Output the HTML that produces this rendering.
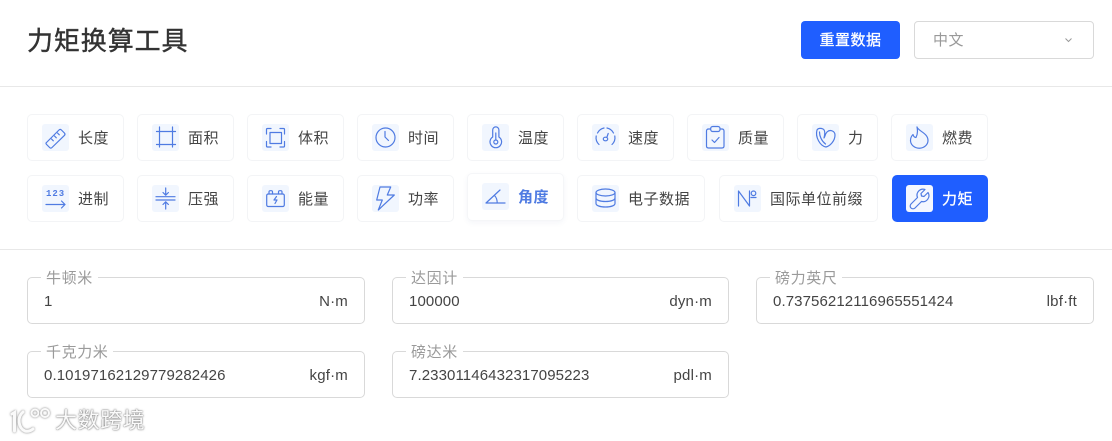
<!DOCTYPE html>
<html lang="zh"><head><meta charset="utf-8"><title>力矩换算工具</title>
<style>
*{box-sizing:border-box}
html,body{margin:0;padding:0;width:1112px;height:441px;overflow:hidden;background:#fff;font-family:"Liberation Sans","Noto Sans CJK SC",sans-serif;color:#333}
.a{position:absolute}
.hr{position:absolute;left:0;width:1112px;height:1px;background:#e8e8e8}
.b{position:absolute;height:47px;border:1px solid #f3f4f6;border-radius:5px;background:#fff;font-size:15px;letter-spacing:.5px;color:#444}
.b .i{position:absolute;left:14px;top:9px;width:27px;height:27px;background:#f1f6fe;border-radius:3px}
.b .i svg{position:absolute;left:0;top:0;width:27px;height:27px;fill:none;stroke:#4f7be2;stroke-width:1.2;stroke-linecap:round;stroke-linejoin:round}
.b span{position:absolute;left:50px;top:0;line-height:47px;white-space:nowrap}
.f{position:absolute;height:47px;border:1px solid #d9d9d9;border-radius:5px;background:#fff}
.f label{position:absolute;left:13px;top:-9px;background:#fff;padding:0 5px;font-size:15px;letter-spacing:.6px;line-height:20px;color:#9a9a9a;white-space:nowrap}
.f .v{position:absolute;left:16px;top:14px;font-size:15px;letter-spacing:.1px;line-height:20px;color:#444;white-space:nowrap}
.f .u{position:absolute;right:16px;top:14px;font-size:15px;letter-spacing:.2px;line-height:20px;color:#444;white-space:nowrap}
</style></head><body>
<div class="a" style="left:27px;top:22px;font-size:26px;line-height:38px;letter-spacing:.9px;color:#333;white-space:nowrap;-webkit-text-stroke:.4px #333">力矩换算工具</div>
<div class="a" style="left:801px;top:21px;width:99px;height:38px;border-radius:4px;background:#1f5eff;color:#fff;font-size:15px;letter-spacing:.5px;line-height:40px;text-align:center;-webkit-text-stroke:.3px #fff">重置数据</div>
<div class="a" style="left:914px;top:21px;width:180px;height:38px;border:1px solid #d9d9d9;border-radius:4px;color:#999;font-size:15px;letter-spacing:.5px;line-height:38px;padding-left:18px">中文
<svg class="a" style="left:149px;top:15px" width="10" height="7" fill="none" stroke="#999" stroke-width="1"><path d="M1.500 1.500l3 3 3-3"/></svg></div>
<div class="hr" style="top:86px"></div>
<div class="hr" style="top:249px"></div>

<div class="b" style="left:27px;top:114px;width:97px"><div class="i"><svg viewBox="0 0 27 27"><path d="M4.500 18.500L17 6q1.200-1.200 2.400 0l3 3q1.200 1.200 0 2.400L10 23.500q-1.200 1.200-2.400 0l-3-3q-1.200-1.200-.1-2z"/><path d="M9.500 15l1.800 1.800M12.500 12l1.800 1.800M15.500 9l1.800 1.800"/></svg></div><span>长度</span></div>
<div class="b" style="left:137px;top:114px;width:97px"><div class="i"><svg viewBox="0 0 27 27"><path d="M7.500 3v20M20.500 3v20M4.500 7.500h19M4.500 20.500h19"/></svg></div><span>面积</span></div>
<div class="b" style="left:247px;top:114px;width:97px"><div class="i"><svg viewBox="0 0 27 27"><rect x="8" y="8.500" width="11.500" height="11"/><path d="M9 4.500H5.500q-1 0-1 1V10M18 4.500h3.500q1 0 1 1V10M9 23H5.500q-1 0-1-1v-4.500M18 23h3.500q1 0 1-1v-4.500"/></svg></div><span>体积</span></div>
<div class="b" style="left:357px;top:114px;width:97px"><div class="i"><svg viewBox="0 0 27 27"><circle cx="13.500" cy="13.500" r="9.500"/><path d="M13 7.500V13l3.500 3.500"/></svg></div><span>时间</span></div>
<div class="b" style="left:467px;top:114px;width:97px"><div class="i"><svg viewBox="0 0 27 27"><path d="M10.700 13V6a3.100 3.100 0 016.200 0v7a5.800 5.800 0 11-6.200 0z"/><circle cx="13.800" cy="18" r="2"/><path d="M13.800 9v7"/></svg></div><span>温度</span></div>
<div class="b" style="left:577px;top:114px;width:97px"><div class="i"><svg viewBox="0 0 27 27"><path d="M7 20.500A9.500 9.500 0 0 1 4.200 12M5.500 9A9.500 9.500 0 0 1 12 4M15 4A9.500 9.500 0 0 1 21.500 9M22.800 12A9.500 9.500 0 0 1 20 20.500"/><ellipse cx="13.500" cy="15" rx="2.200" ry="1.800"/><path d="M14.800 13.500l1.400-4"/></svg></div><span>速度</span></div>
<div class="b" style="left:687px;top:114px;width:97px"><div class="i"><svg viewBox="0 0 27 27"><path d="M8.500 5H6.500q-2 0-2 2v15q0 2 2 2h13.500q2 0 2-2V7q0-2-2-2h-2"/><rect x="8.700" y="2.500" width="9.300" height="5" rx="2"/><path d="M10 16l2.500 2.500 4.500-5"/></svg></div><span>质量</span></div>
<div class="b" style="left:797px;top:114px;width:81px"><div class="i"><svg viewBox="0 0 27 27"><path d="M5 6C3 13 8 22 14 23c4-1 9-6 9-12 0-4-5-6-8-3-2 2-2 5-3 6 1-4 1-8-1-9-2-1-5-1-6 1z"/><path d="M7.500 8c0 4 2 9 6 12"/></svg></div><span>力</span></div>
<div class="b" style="left:891px;top:114px;width:97px"><div class="i"><svg viewBox="0 0 27 27"><path d="M11 3c1 4 11 6 11 13.500a8.500 7.500 0 01-17.500 0c0-2.500 1-4.500 2.500-6 .5 2 1.500 3 3 3 1.500-3 2-6 1-10.500z"/></svg></div><span>燃费</span></div>

<div class="b" style="left:27px;top:175px;width:97px"><div class="i"><svg viewBox="0 0 27 27"><path d="M4 19.500h19M19.500 16l3.500 3.500-3.500 3.500"/></svg><div class="a" style="left:4px;top:4px;width:21px;font:bold 9px/10px 'Liberation Mono',monospace;letter-spacing:1px;color:#4f7be2">123</div></div><span>进制</span></div>
<div class="b" style="left:137px;top:175px;width:97px"><div class="i"><svg viewBox="0 0 27 27"><path d="M4 11.700h19M4 15h19M13.700 3v7M11 7.500l2.700 2.700 2.700-2.700M13.700 24v-7M11 19.500l2.700-2.700 2.700 2.700"/></svg></div><span>压强</span></div>
<div class="b" style="left:247px;top:175px;width:97px"><div class="i"><svg viewBox="0 0 27 27"><rect x="4.700" y="9" width="17.600" height="12.500" rx="1.500"/><path d="M7 9V7q0-1.300 1.200-1.300h1.100q1.200 0 1.200 1.300v2M16.500 9V7q0-1.300 1.200-1.300h1.100q1.200 0 1.200 1.300v2M14.500 11.500l-2.500 3.500h3l-2 3.500"/></svg></div><span>能量</span></div>
<div class="b" style="left:357px;top:175px;width:97px"><div class="i"><svg viewBox="0 0 27 27"><path d="M8 2h10.700l-3.400 8h7L6.300 25l4-10H4.700z"/></svg></div><span>功率</span></div>
<div class="b" style="left:467px;top:173px;width:97px;height:48px;border-color:#f5f6f8;box-shadow:0 2px 6px rgba(40,70,140,.05);color:#4f7be2;font-weight:bold"><div class="i"><svg viewBox="0 0 27 27"><path d="M4 20L18 7M4 20h19M12.500 12.500c2 2 2.700 4.500 2.700 7.500"/></svg></div><span>角度</span></div>
<div class="b" style="left:577px;top:175px;width:128px"><div class="i"><svg viewBox="0 0 27 27"><ellipse cx="13.500" cy="7.500" rx="9.500" ry="3.500"/><path d="M4 7.500v11c0 2 4 3.500 9.500 3.500s9.500-1.500 9.500-3.500v-11M4 13c0 2 4 3.500 9.500 3.500S23 15 23 13"/></svg></div><span>电子数据</span></div>
<div class="b" style="left:719px;top:175px;width:159px"><div class="i"><svg viewBox="0 0 27 27"><path d="M4.500 21V6l11 15V6"/><circle cx="19.500" cy="8.300" r="2.300"/><path d="M17 12.500h5"/></svg></div><span>国际单位前缀</span></div>
<div class="b" style="left:892px;top:175px;width:96px;border-color:#1f5eff;background:#1f5eff;color:#fff"><div class="i" style="background:#f4f7ff;left:13px"><svg viewBox="0 0 27 27"><path d="M22 7.500l-4 4-2.500-.5-.5-2.500 4-4A6 6 0 0 0 11.500 12.500L5 19a2.800 2.800 0 0 0 4 4l6.500-6.500A6 6 0 0 0 22 7.500z"/></svg></div><span style="left:49px;-webkit-text-stroke:.3px #fff">力矩</span></div>

<div class="f" style="left:27px;top:277px;width:338px"><label>牛顿米</label><div class="v">1</div><div class="u">N·m</div></div>
<div class="f" style="left:392px;top:277px;width:337px"><label>达因计</label><div class="v">100000</div><div class="u">dyn·m</div></div>
<div class="f" style="left:756px;top:277px;width:338px"><label>磅力英尺</label><div class="v">0.73756212116965551424</div><div class="u">lbf·ft</div></div>
<div class="f" style="left:27px;top:351px;width:338px"><label>千克力米</label><div class="v">0.10197162129779282426</div><div class="u">kgf·m</div></div>
<div class="f" style="left:392px;top:351px;width:337px"><label>磅达米</label><div class="v">7.23301146432317095223</div><div class="u">pdl·m</div></div>

<svg class="a" style="left:8px;top:406px;filter:drop-shadow(0 0 1px #777)" width="46" height="30" fill="none" stroke="#fafafa" stroke-width="3" stroke-linecap="round"><path d="M4 8l2.500-1.500V25"/><path d="M15 6C9 11 10 22 17 25q4 1 8-2"/><circle cx="27" cy="7" r="3.500" stroke-width="2"/><circle cx="37" cy="7" r="4" stroke-width="2"/></svg>
<div class="a" style="left:55px;top:408px;font-size:22px;line-height:26px;letter-spacing:.6px;color:#fafafa;white-space:nowrap;text-shadow:0 0 2px #777,0 0 1px #777">大数跨境</div>
</body></html>
